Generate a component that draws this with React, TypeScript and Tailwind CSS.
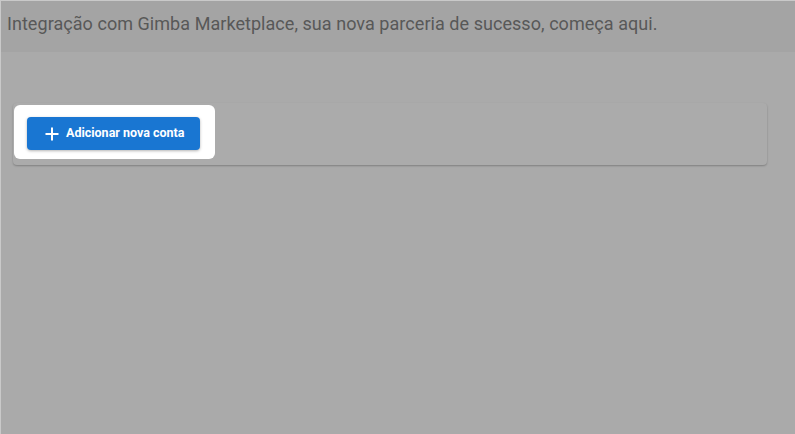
import React from 'react'

function PlusIcon() {
  return (
    <svg width="14" height="14" viewBox="0 0 14 14" fill="none">
      <path d="M7 0.5v13M0.5 7h13" stroke="white" strokeWidth="2" />
    </svg>
  )
}

export default function App() {
  return (
    <div
      className="w-[795px] h-[434px] bg-[#aaaaaa] border-t border-l border-[#c9c9c9] flex flex-col"
      style={{ fontFamily: 'Roboto, "Liberation Sans", sans-serif' }}
    >
      <div className="h-[51px] bg-[#a4a4a4] pl-[6px] pt-[11px]">
        <h1 className="text-[18px] leading-[24px] tracking-[0.05px] text-[#585858]">
          Integração com Gimba Marketplace, sua nova parceria de sucesso, começa aqui.
        </h1>
      </div>
      <div className="px-[12px] pt-[51px]">
        <div className="w-[754px] h-[62px] rounded-[4px] bg-[#ababab] shadow-[0_1px_2px_rgba(0,0,0,0.25)] pl-[1px] pt-[2px]">
          <div className="w-[201px] h-[54px] rounded-[6px] bg-white pl-[13px] pt-[12px]">
            <button className="w-[173px] h-[33px] rounded-[4px] bg-[#1976d2] shadow-[0_1px_3px_rgba(0,0,0,0.3)] flex items-center pl-[18px] gap-[7px] text-white text-[12.5px] font-bold">
              <PlusIcon />
              <span>Adicionar nova conta</span>
            </button>
          </div>
        </div>
      </div>
    </div>
  )
}
